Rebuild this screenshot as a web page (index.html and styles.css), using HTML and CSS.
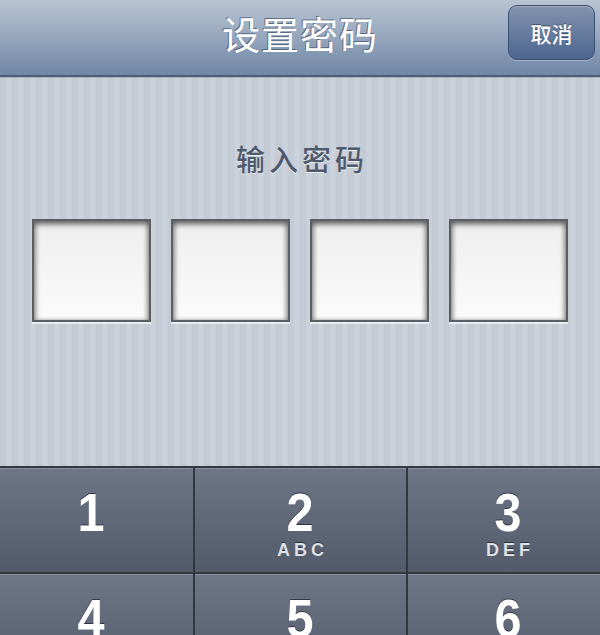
FILE: index.html
```html
<!DOCTYPE html>
<html lang="zh-CN">
<head>
    <meta charset="UTF-8">
    <meta name="viewport" content="width=device-width, initial-scale=1.0">
    <title>设置密码</title>
    <link rel="stylesheet" href="styles.css">
</head>
<body>

<header class="navbar">
    <h1 class="nav-title">设置密码</h1>
    <button class="nav-cancel">取消</button>
</header>

<main class="passcode">
    <p class="passcode-label">输入密码</p>
    <div class="passcode-boxes">
        <div class="passcode-box"></div>
        <div class="passcode-box"></div>
        <div class="passcode-box"></div>
        <div class="passcode-box"></div>
    </div>
</main>

<div class="keypad">
    <button class="key key-left"><span class="key-num">1</span></button>
    <button class="key"><span class="key-num">2</span><span class="key-sub">ABC</span></button>
    <button class="key key-right"><span class="key-num">3</span><span class="key-sub">DEF</span></button>
    <button class="key key-left"><span class="key-num">4</span><span class="key-sub">GHI</span></button>
    <button class="key"><span class="key-num">5</span><span class="key-sub">JKL</span></button>
    <button class="key key-right"><span class="key-num">6</span><span class="key-sub">MNO</span></button>
</div>

</body>
</html>
```

FILE: styles.css
```css
/* Global */
* {
    box-sizing: border-box;
    margin: 0;
    padding: 0;
}
html, body {
    width: 600px;
    height: 635px;
    overflow: hidden;
}
body {
    font-family: "Liberation Sans", "Noto Sans CJK SC", sans-serif;
    background-color: #c6cdd7;
    background-image: repeating-linear-gradient(90deg,
        #c4cbd5 0px, #c4cbd5 6px, #cbd2db 7px, #cbd2db 11px, #c4cbd5 12px);
    display: flex;
    flex-direction: column;
}

/* Navigation bar */
.navbar {
    height: 77px;
    flex-shrink: 0;
    display: flex;
    align-items: center;
    justify-content: center;
    position: relative;
    background: linear-gradient(#b8c4d3 0%, #95a6bd 50%, #7086a5 100%);
    border-bottom: 2px solid #4c5f7c;
    box-shadow: 0 1px 0 rgba(0, 0, 0, 0.15);
}
.nav-title {
    font-family: "Noto Sans CJK SC", sans-serif;
    font-size: 38px;
    font-weight: 400;
    color: #fff;
    letter-spacing: 1px;
    text-shadow: -1px -1px 0 rgba(50, 65, 90, 0.6);
    margin-top: -10px;
}
.nav-cancel {
    position: absolute;
    top: 5px;
    right: 5px;
    width: 87px;
    height: 55px;
    border: 1px solid #3d5072;
    border-radius: 9px;
    background: linear-gradient(#8193ad, #4d6690);
    box-shadow: inset 0 1px 0 rgba(255, 255, 255, 0.25), 0 1px 0 rgba(255, 255, 255, 0.3);
    font-family: "Noto Sans CJK SC", sans-serif;
    font-size: 21px;
    font-weight: 500;
    color: #fff;
    text-shadow: 0 -1px 0 rgba(30, 40, 60, 0.6);
}

/* Passcode entry */
.passcode {
    flex: 1;
    display: flex;
    flex-direction: column;
    align-items: center;
}
.passcode-label {
    margin-top: 60px;
    font-family: "Noto Sans CJK SC", sans-serif;
    font-size: 29px;
    font-weight: 500;
    letter-spacing: 4px;
    padding-left: 4px;
    color: #4f596c;
    text-shadow: 0 1px 0 rgba(255, 255, 255, 0.7);
}
.passcode-boxes {
    display: flex;
    gap: 20px;
    margin-top: 40px;
    margin-left: -1px;
}
.passcode-box {
    width: 119px;
    height: 103px;
    border: 2px solid #5b5e63;
    background: linear-gradient(#eeeeee, #fbfbfb);
    box-shadow: inset 0 4px 5px rgba(0, 0, 0, 0.45), inset 3px 0 4px rgba(0, 0, 0, 0.2),
        inset -3px 0 4px rgba(0, 0, 0, 0.2), 0 2px 0 rgba(255, 255, 255, 0.6);
}

/* Number pad */
.keypad {
    flex-shrink: 0;
    display: grid;
    grid-template-columns: 193px 211px 1fr;
    grid-auto-rows: 104px;
    gap: 2px;
    height: 169px;
    overflow: hidden;
    background-color: #33373f;
    border-top: 2px solid #33373f;
}
.key {
    border: none;
    background: linear-gradient(#6e7687, #535a6a);
    box-shadow: inset 0 1px 0 rgba(255, 255, 255, 0.2);
    color: #fff;
    display: flex;
    flex-direction: column;
    align-items: center;
    justify-content: flex-start;
    font-family: "Liberation Sans", sans-serif;
}
.key-left {
    padding-right: 10px;
}
.key-right {
    padding-left: 8px;
}
.key-num {
    font-size: 54px;
    font-weight: 700;
    line-height: 1;
    margin-top: 17px;
    transform: scaleX(0.9);
    text-shadow: 0 -1px 0 rgba(0, 0, 0, 0.5);
}
.key-sub {
    font-size: 18px;
    font-weight: 700;
    letter-spacing: 4px;
    padding-left: 4px;
    margin-top: 1px;
    color: #dfe1e5;
    text-shadow: 0 -1px 0 rgba(0, 0, 0, 0.5);
}
```
